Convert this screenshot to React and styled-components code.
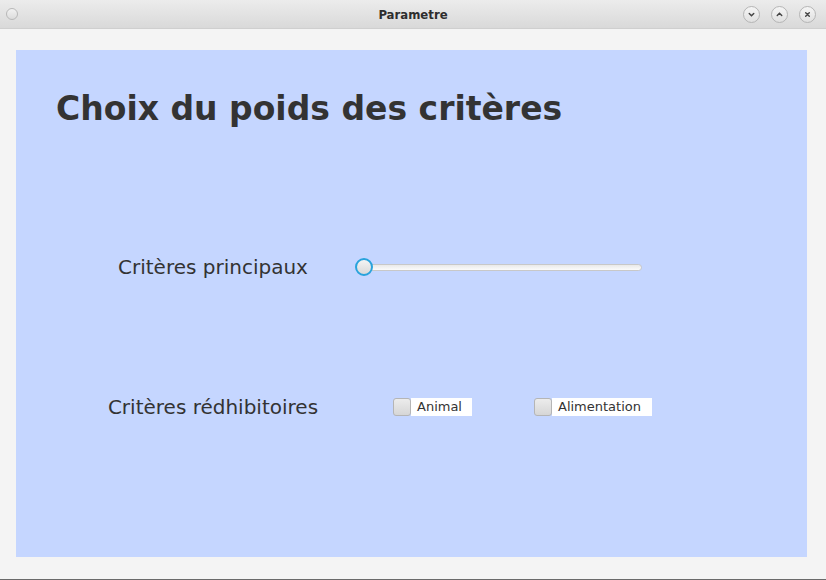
import React, { useState } from "react";
import styled, { createGlobalStyle } from "styled-components";

const Global = createGlobalStyle`
  html, body { margin: 0; padding: 0; background: #f4f4f4; }
  * { box-sizing: border-box; }
`;

const Window = styled.div`
  width: 826px;
  height: 580px;
  display: flex;
  flex-direction: column;
  background: #f4f4f4;
  border-bottom: 1px solid #6a6a6a;
  font-family: "DejaVu Sans", Verdana, sans-serif;
`;

const TitleBar = styled.div`
  height: 29px;
  flex: none;
  display: flex;
  align-items: center;
  justify-content: space-between;
  padding: 0 10px 0 6px;
  background: linear-gradient(#ececec, #d9d9d9);
  border-bottom: 1px solid #cfcfcf;
`;

const TitleText = styled.div`
  font-family: "DejaVu Sans Condensed", "DejaVu Sans", sans-serif;
  font-weight: bold;
  font-size: 13px;
  color: #2e2e2e;
  position: absolute;
  left: 0;
  right: 0;
  top: 7px;
  text-align: center;
  pointer-events: none;
`;

const Dot = styled.span`
  width: 12px;
  height: 12px;
  border-radius: 50%;
  border: 1px solid #b8b8b8;
  background: linear-gradient(#f2f2f2, #dcdcdc);
`;

const Controls = styled.div`
  display: flex;
  gap: 11px;
`;

const WinButton = styled.span`
  width: 17px;
  height: 17px;
  border-radius: 50%;
  border: 1px solid #b5b5b5;
  background: linear-gradient(#f5f5f5, #e0e0e0);
  display: flex;
  align-items: center;
  justify-content: center;
  color: #444;
`;

const Body = styled.div`
  flex: 1;
  padding: 21px 19px 22px 16px;
  display: flex;
`;

const Panel = styled.div`
  flex: 1;
  background: #c5d6ff;
  display: flex;
  flex-direction: column;
`;

const Heading = styled.h1`
  margin: 0;
  padding: 39px 0 0 40px;
  font-family: "DejaVu Sans", sans-serif;
  font-weight: bold;
  font-size: 33px;
  line-height: 40px;
  color: #333333;
`;

const Row = styled.div`
  display: flex;
  align-items: center;
  height: 30px;
  margin-top: ${(p) => p.$top}px;
  padding-left: 72px;
`;

const Label = styled.div`
  width: 250px;
  text-align: center;
  font-size: 20px;
  color: #333333;
`;

const Track = styled.div`
  position: relative;
  margin-left: 18px;
  width: 286px;
  height: 7px;
  border-radius: 4px;
  border: 1px solid #c8c8c8;
  background: linear-gradient(#e9e9e9, #fbfbfb);
`;

const Thumb = styled.div`
  position: absolute;
  left: -2px;
  top: 50%;
  width: 18px;
  height: 18px;
  margin-top: -9px;
  border-radius: 50%;
  border: 2px solid #29a3dc;
  background: linear-gradient(#f4f4f4, #d9d9d9);
`;

const Checks = styled.div`
  display: flex;
  gap: 62px;
  margin-left: 55px;
`;

const Check = styled.label`
  display: flex;
  align-items: center;
  cursor: pointer;
`;

const Box = styled.span`
  width: 18px;
  height: 18px;
  border-radius: 3px;
  border: 1px solid #b5b5b5;
  background: linear-gradient(#ececec, #d6d6d6);
  display: flex;
  align-items: center;
  justify-content: center;
  font-size: 12px;
  color: #333;
`;

const CheckText = styled.span`
  background: #ffffff;
  height: 18px;
  width: ${(p) => p.$w}px;
  padding-left: 6px;
  font-size: 13px;
  line-height: 18px;
  color: #333333;
`;

function CheckBox({ label, width }) {
  const [on, setOn] = useState(false);
  return (
    <Check onClick={() => setOn(!on)}>
      <Box>{on ? "✓" : ""}</Box>
      <CheckText $w={width}>{label}</CheckText>
    </Check>
  );
}

const Chevron = ({ d }) => (
  <svg width="9" height="9" viewBox="0 0 10 10" fill="none" stroke="#444" strokeWidth="1.6" strokeLinecap="round">
    <path d={d} />
  </svg>
);

export default function App() {
  return (
    <>
      <Global />
      <Window>
        <TitleBar>
          <Dot />
          <TitleText>Parametre</TitleText>
          <Controls>
            <WinButton><Chevron d="M2.5 4 L5 6.5 L7.5 4" /></WinButton>
            <WinButton><Chevron d="M2.5 6 L5 3.5 L7.5 6" /></WinButton>
            <WinButton><Chevron d="M3 3 L7 7 M7 3 L3 7" /></WinButton>
          </Controls>
        </TitleBar>
        <Body>
          <Panel>
            <Heading>Choix du poids des critères</Heading>
            <Row $top={123}>
              <Label>Critères principaux</Label>
              <Track>
                <Thumb />
              </Track>
            </Row>
            <Row $top={110}>
              <Label>Critères rédhibitoires</Label>
              <Checks>
                <CheckBox label="Animal" width={61} />
                <CheckBox label="Alimentation" width={100} />
              </Checks>
            </Row>
          </Panel>
        </Body>
      </Window>
    </>
  );
}
